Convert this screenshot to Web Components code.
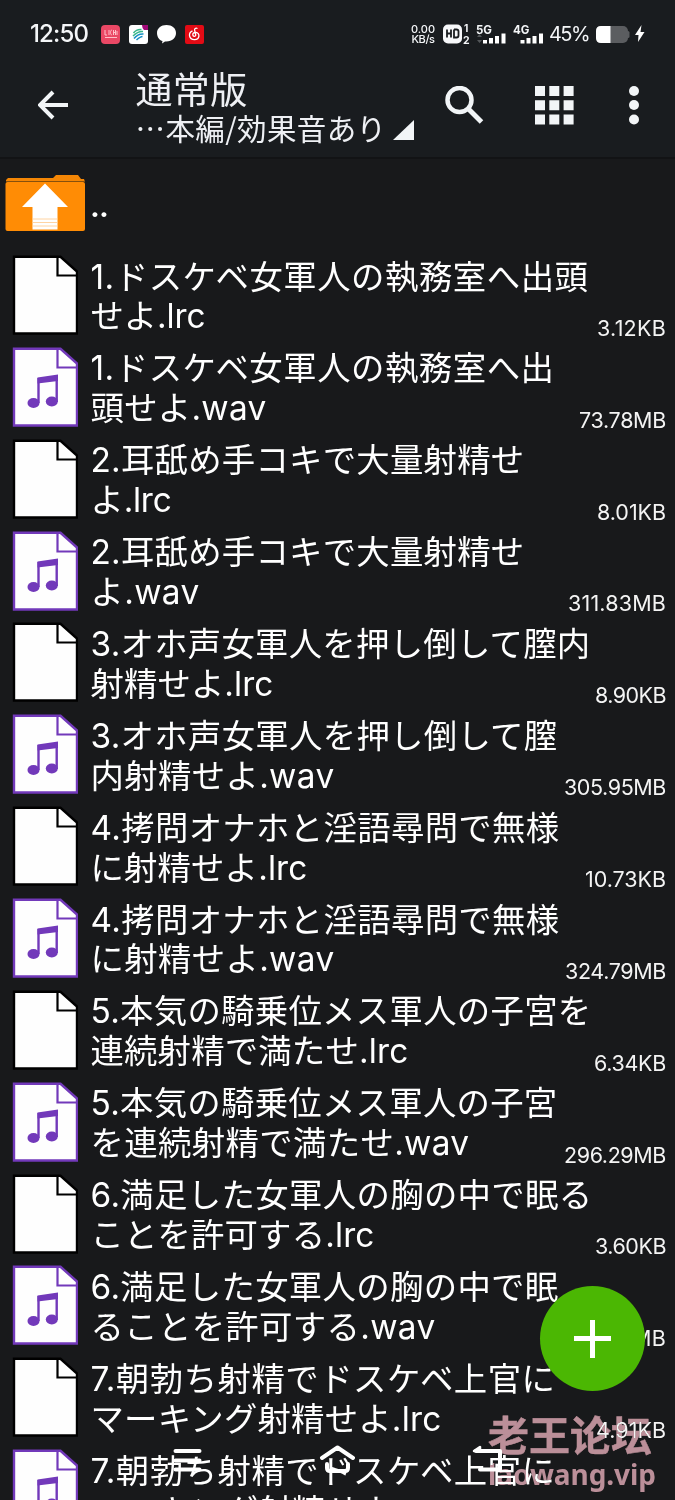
<!DOCTYPE html>
<html lang="ja">
<head>
<meta charset="utf-8">
<title>通常版</title>
<style>
html,body{margin:0;background:#18191b;width:675px;height:1500px;overflow:hidden}
</style>
</head>
<body>
<file-app></file-app>
<script>
const FONT = 'font-family:Inter,"Noto Sans CJK JP",sans-serif;';
const define = (name, html, after) => customElements.define(name, class extends HTMLElement {
  connectedCallback() {
    if (this.shadowRoot) return;
    const root = this.attachShadow({mode: 'open'});
    root.innerHTML = typeof html === 'function' ? html(this) : html;
    if (after) after(this, root);
  }
});

/* A single line of text whose tracking is adjusted to a given width. */
define('fit-line', `<style>:host{display:block;white-space:pre}span{display:inline-block;white-space:pre}</style><span><slot></slot></span>`, (host, root) => {
  const w = +host.getAttribute('width');
  if (!w) return;
  const s = root.querySelector('span');
  const n = [...host.textContent].length;
  s.style.letterSpacing = ((w - s.getBoundingClientRect().width) / n) + 'px';
});

define('status-bar', `<style>
:host{display:flex;align-items:center;height:68px;box-sizing:border-box;padding:0 0 0 30px;color:#f4f6f8;${FONT}}
.time{width:70.500px;font-size:24px;font-weight:450;line-height:30px}
svg{display:block;flex:none}
.apps{display:flex;gap:9.2px;flex:1}
.net{width:24px;font-size:11px;line-height:10.5px;font-weight:500;text-align:center;margin-right:7px}
.pct{font-size:20px;width:41px;margin-right:6px;line-height:24px}
.sig{margin-right:5px}
text{font-family:Inter,sans-serif;fill:#f4f6f8;font-weight:700}
</style>
<fit-line class="time" width="58">12:50</fit-line>
<div class="apps">
<svg width="19" height="19" viewBox="0 0 19 19"><rect width="19" height="19" rx="4" fill="#ea4865"/><path d="M4 5v5h2M8 5v5M11 5c-2 0-2 5 0 5M12.5 5v5M12.5 7.5h2M14.5 5v5M16 10V6M4 12.5h12" stroke="#ffc0ca" fill="none"/></svg>
<svg width="19" height="19" viewBox="0 0 19 19"><rect width="19" height="19" rx="3" fill="#fff"/><path d="M13 0h6v5h-4q-2-2-2-5" fill="#a00a78"/><g fill="none" stroke-width="1.5"><path d="M4.500 8q3-4 8-3.500M4 11q5-5 10-4.500" stroke="#37b68a"/><path d="M5 13.500q4-5 9.500-4.500M7.500 15q4-3.500 6-3.500" stroke="#158fc3"/></g></svg>
<svg width="19" height="19" viewBox="0 0 19 19"><path d="M9.500 0C4 0 0 3.500 0 8s3 7.500 5.500 8L5 18.500l3-2C15 17 19 13 19 8S15 0 9.500 0" fill="#fff"/></svg>
<svg width="19" height="19" viewBox="0 0 19 19"><rect width="19" height="19" rx="2" fill="#e30b15"/><path d="M12.500 3.500c-2-.8-3.300.3-2.800 2.200l1 4c.2 2-2.700 2.200-2.900.2-.1-1.800 1.400-2.700 3-2.600 4.500.5 4.200 7.300-1.300 7.300-6 0-6.500-6.800-2-8.800" stroke="#fff" stroke-width="1.300" fill="none"/></svg>
</div>
<div class="net"><fit-line width="24">0.00</fit-line><fit-line width="23">KB/s</fit-line></div>
<svg width="34" height="22" viewBox="0 0 34 22"><rect x="1" y="1.500" width="19" height="19" rx="5" fill="#f7f8fa"/><path d="M5 6.500v8M9 6.500v8M5 10.500h4M12 6.500v8h2.500q2 0 2-2v-4q0-2-2-2H12" stroke="#191c1f" stroke-width="1.800" fill="none"/><text x="22" y="9" font-size="10">1</text><text x="21" y="20.500" font-size="10.500">2</text></svg>
<svg class="sig" width="32" height="22" viewBox="0 0 32 22"><text x="0" y="10.500" font-size="11.500">5G</text><path d="M1 14l2.500-3L6 14zM1 17l2.500 3L6 17z" fill="#535659"/><path d="M9 20.500V17M15 20.500V15M21 20.500V13M27.500 20.500V10.500" stroke="#fff" stroke-width="4"/></svg>
<svg style="margin-right:5px" width="31" height="22" viewBox="0 0 31 22"><text x="0" y="10.500" font-size="11.500">4G</text><path d="M9.500 20.500V17M15.500 20.500V15M21.500 20.500V13M28 20.500V10.500" stroke="#fff" stroke-width="4"/></svg>
<fit-line class="pct" width="40">45%</fit-line>
<svg width="34" height="17" viewBox="0 0 34 17"><rect width="32" height="17" rx="5" fill="#5b5d60"/><path d="M31.500 5h.5q1.500 0 1.500 1.500v4q0 1.500-1.500 1.500h-.5z" fill="#5b5d60"/><path d="M5 0h9.500v17H5q-5 0-5-5V5q0-5 5-5" fill="#fff"/></svg>
<svg style="margin:0 30px 0 5px" width="10" height="18" viewBox="0 0 10 18"><path d="M6.500 0L0 10h3.500L3 17 9.500 7H5.500z" fill="#fff"/></svg>`);

define('top-bar', `<style>
:host{display:flex;height:90.500px;box-sizing:border-box;border-bottom:2px solid #121315;color:#eef0f4;${FONT}}
.back{width:98px;padding:22px 0 0 37.500px}
.titles{width:284px;padding-top:1px}
.t{font-size:37px;line-height:44px}
.row{display:flex;margin-top:-3px}
.s{font-size:29.500px;line-height:34px;width:257px;font-family:"Noto Sans CJK JP",sans-serif}
svg{display:block}
.search{margin:18px 0 0 25.500px}
.grid{margin:18px 0 0 51px}
.more{margin:18px 0 0 53.500px}
</style>
<div class="back"><svg width="32" height="30" viewBox="0 0 32 30"><path d="M15 2L2 15l13 13M2 15h28" fill="none" stroke="#f2f5f7" stroke-width="4"/></svg></div>
<div class="titles"><fit-line class="t" width="112">通常版</fit-line><div class="row"><fit-line class="s" width="251">…本編/効果音あり</fit-line><svg style="margin-top:9.500px" width="21" height="20" viewBox="0 0 21 20"><path d="M0 20L21 0v20z" fill="#f2f5f7"/></svg></div></div>
<svg class="search" width="39" height="38" viewBox="0 0 39 38"><circle cx="14.500" cy="14" r="12" fill="none" stroke="#f2f5f7" stroke-width="4.500"/><path d="M23 22.500L36.500 36" stroke="#f2f5f7" stroke-width="5"/></svg>
<svg class="grid" width="39" height="39" viewBox="0 0 39 39" fill="#f2f5f7"><path d="M0 0h10v10H0zM14.300 0h10v10h-10zM28.600 0h10v10h-10zM0 14.200h10v10H0zM14.300 14.200h10v10h-10zM28.600 14.200h10v10h-10zM0 28.400h10v10H0zM14.300 28.400h10v10h-10zM28.600 28.400h10v10h-10z"/></svg>
<svg class="more" width="12" height="39" viewBox="0 0 12 39" fill="#f2f5f7"><circle cx="6" cy="5" r="5"/><circle cx="6" cy="19" r="5"/><circle cx="6" cy="33.500" r="5"/></svg>`);

define('file-icon', h => {
  const audio = h.getAttribute('kind') === 'audio', c = audio ? '#7239ba' : '#000';
  return `<style>:host{display:block}svg{display:block}</style>
<svg width="66" height="80" viewBox="0 0 66 80"><path d="M2 1.800H48.500L65 16.500V78.500H2z" fill="#fefefe" stroke="${c}" stroke-width="2.400"/><path d="M45.500 2v18.500h19" fill="none" stroke="${c}" stroke-width="2.200"/>${audio ? `<path d="M25.500 30.500l20.500-3v6.500L25.500 36.500z" fill="${c}"/><path d="M26.500 31v25M44.700 29v26" stroke="${c}" stroke-width="2.400"/><ellipse cx="21.500" cy="56" rx="6" ry="5" fill="${c}"/><ellipse cx="39.800" cy="54.500" rx="6" ry="5" fill="${c}"/>` : ''}</svg>`;
});

define('file-row', `<style>
:host{display:flex;height:91.86px;box-sizing:border-box;padding:0 9px 0 12px;color:#fff;${FONT}}
file-icon{margin-top:5.500px;width:78.500px;flex:none}
.name{flex:none;width:470px;margin-top:8.100px;font-size:33.400px;line-height:39.8px}
.size{margin-left:auto;flex:none;padding-top:65.400px;font-size:21.500px;line-height:26px;white-space:nowrap;color:#f4f4f4}
</style>
<file-icon></file-icon><div class="name"><slot></slot></div><div class="size"></div>`, (h, r) => {
  const i = document.createElement('file-icon');
  i.setAttribute('kind', h.getAttribute('kind'));
  r.querySelector('file-icon').replaceWith(i);
  const size = h.getAttribute('size');
  if (!size) return;
  const line = document.createElement('fit-line');
  line.setAttribute('width', h.getAttribute('size-width'));
  line.textContent = size;
  r.querySelector('.size').append(line);
});

define('parent-row', `<style>:host{display:flex;height:91px;box-sizing:border-box;padding:15.500px 0 0 5px;color:#fff;${FONT}font-size:33px;line-height:40px}svg{display:block;margin-right:4px}span{padding-top:12px;font-weight:600;font-size:31px;letter-spacing:-1px}</style>
<svg width="81" height="58" viewBox="0 0 81 58"><path d="M1 8V6l2-2h45l3-3h22l3 4h3l1 3z" fill="#f48605"/><rect x=".5" y="8" width="79.500" height="49" rx="2" fill="#ff8c05"/><path d="M1 7.500h79" stroke="#86500d" stroke-width="1"/><path d="M40 9.500L63 33H52.500V55.500H27.500V33H17z" fill="#fff"/><path d="M27 45h26M27 48.500h26M27 52h26" stroke="#ffc98c" stroke-width=".8"/></svg><span>..</span>`);

define('add-button', `<style>:host{display:block;position:absolute;left:540px;top:1286px;width:105px;height:105px;border-radius:50%;background:#4bb703}svg{display:block}</style><svg width="105" height="105"><path d="M52.500 34v38M34 52.500h37" stroke="#fff" stroke-width="5"/></svg>`);

define('nav-buttons', `<style>:host{display:flex;position:absolute;left:0;top:1440px;width:675px;height:40px}svg{display:block}</style>
<svg width="675" height="40" viewBox="0 0 675 40" fill="none" stroke="#fff" stroke-width="4" stroke-linecap="round" stroke-linejoin="round"><path d="M175.500 11h24M175.500 20.500h24M175.500 29.500h24M322 18l15.500-10.500L353 18M327 24v4q0 3 3 3h15q3 0 3-3v-4M476 11h24v18.500h-20" /><path d="M474 11l6-4v4z" stroke-width="2.500" fill="#fff"/></svg>`);

define('forum-mark', `<style>:host{display:block;position:absolute;left:488px;top:1406px;color:#bb8f99;mix-blend-mode:lighten;font-weight:700}.a{font-size:41px;line-height:54px;font-weight:700;-webkit-text-stroke:.5px #bb8f99;font-family:"Noto Sans CJK SC",sans-serif}.b{font-size:28px;line-height:30px;margin-top:-1px;font-family:"Noto Sans",sans-serif}</style><fit-line class="a" width="164">老王论坛</fit-line><fit-line class="b" width="168">laowang.vip</fit-line>`);

const FILES = [
 ['1.ドスケベ女軍人の執務室へ出頭',588,'せよ.lrc',205,'3.12KB',69],
 ['1.ドスケベ女軍人の執務室へ出',554,'頭せよ.wav',266,'73.78MB',87],
 ['2.耳舐め手コキで大量射精せ',524,'よ.lrc',171,'8.01KB',69],
 ['2.耳舐め手コキで大量射精せ',524,'よ.wav',199,'311.83MB',98],
 ['3.オホ声女軍人を押し倒して膣内',590,'射精せよ.lrc',273,'8.90KB',71],
 ['3.オホ声女軍人を押し倒して膣',557,'内射精せよ.wav',334,'305.95MB',102],
 ['4.拷問オナホと淫語尋問で無様',559,'に射精せよ.lrc',307,'10.73KB',81],
 ['4.拷問オナホと淫語尋問で無様',559,'に射精せよ.wav',334,'324.79MB',101],
 ['5.本気の騎乗位メス軍人の子宮を',591,'連続射精で満たせ.lrc',408,'6.34KB',72],
 ['5.本気の騎乗位メス軍人の子宮',557,'を連続射精で満たせ.wav',469,'296.29MB',102],
 ['6.満足した女軍人の胸の中で眠る',592,'ことを許可する.lrc',374,'3.60KB',71],
 ['6.満足した女軍人の胸の中で眠',558,'ることを許可する.wav',435,'290.12MB',101],
 ['7.朝勃ち射精でドスケベ上官に',555,'マーキング射精せよ.lrc',441,'4.91KB',70],
 ['7.朝勃ち射精でドスケベ上官に',555,'マーキング射精せよ.wav',468,'',0]
];
define('file-app', `<style>:host{display:block;position:relative;width:675px;height:1500px;overflow:hidden;background:#18191b}header{background:#191c1f}</style>
<header><status-bar></status-bar><top-bar></top-bar></header><parent-row></parent-row>
<main>${FILES.map(([a, aw, b, bw, s, sw]) => `<file-row kind="${b.endsWith('wav') ? 'audio' : 'text'}" size="${s}" size-width="${sw}"><fit-line width="${aw - 90}">${a}</fit-line><fit-line width="${bw - 90}">${b}</fit-line></file-row>`).join('')}</main>
<forum-mark></forum-mark><add-button></add-button><nav-buttons></nav-buttons>`);
</script>
</body>
</html>
